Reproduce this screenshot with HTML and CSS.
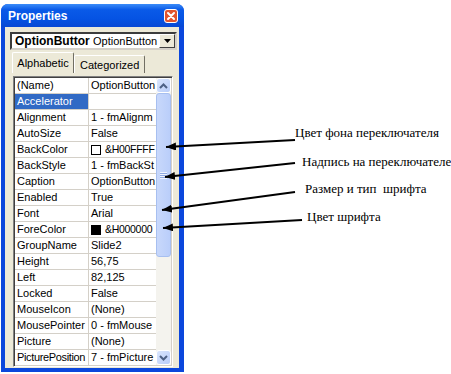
FILE: index.html
```html
<!DOCTYPE html>
<html lang="ru">
<head>
 <meta charset="UTF-8">
 <title>Properties</title>
 <link rel="stylesheet" href="styles.css">
</head>
<body>
 <div class="page">
   <div class="window">
     <div class="titlebar">
       <span class="title">Properties</span>
       <span class="close">
         <svg width="14" height="14" viewBox="0 0 14 14"><path d="M4 4 L10 10 M10 4 L4 10" stroke="#fff" stroke-width="2" stroke-linecap="round"/></svg>
       </span>
     </div>
     <div class="body">
       <div class="combo">
         <span class="combo-name">OptionButtor</span>
         <span class="combo-type">OptionButton</span>
         <span class="combo-btn">
           <svg width="7" height="4" viewBox="0 0 7 4"><path d="M0 0 H7 L3.5 4 Z" fill="#000"/></svg>
         </span>
       </div>
       <div class="tabs">
         <div class="tab active">Alphabetic</div>
         <div class="tab">Categorized</div>
       </div>
       <div class="grid">
         <div class="rows">
           <div class="row"><div class="cell name">(Name)</div><div class="cell value">OptionButton</div></div>
           <div class="row"><div class="cell name selected">Accelerator</div><div class="cell value"></div></div>
           <div class="row"><div class="cell name">Alignment</div><div class="cell value">1 - fmAlignm</div></div>
           <div class="row"><div class="cell name">AutoSize</div><div class="cell value">False</div></div>
           <div class="row"><div class="cell name">BackColor</div><div class="cell value"><span class="swatch white"></span><span class="hex">&amp;H00FFFF</span></div></div>
           <div class="row"><div class="cell name">BackStyle</div><div class="cell value">1 - fmBackSt</div></div>
           <div class="row"><div class="cell name">Caption</div><div class="cell value">OptionButton</div></div>
           <div class="row"><div class="cell name">Enabled</div><div class="cell value">True</div></div>
           <div class="row"><div class="cell name">Font</div><div class="cell value">Arial</div></div>
           <div class="row"><div class="cell name">ForeColor</div><div class="cell value"><span class="swatch black"></span><span class="hex">&amp;H000000</span></div></div>
           <div class="row"><div class="cell name">GroupName</div><div class="cell value">Slide2</div></div>
           <div class="row"><div class="cell name">Height</div><div class="cell value">56,75</div></div>
           <div class="row"><div class="cell name">Left</div><div class="cell value">82,125</div></div>
           <div class="row"><div class="cell name">Locked</div><div class="cell value">False</div></div>
           <div class="row"><div class="cell name">MouseIcon</div><div class="cell value">(None)</div></div>
           <div class="row"><div class="cell name">MousePointer</div><div class="cell value">0 - fmMouse</div></div>
           <div class="row"><div class="cell name">Picture</div><div class="cell value">(None)</div></div>
           <div class="row"><div class="cell name tight">PicturePosition</div><div class="cell value">7 - fmPicture</div></div>
         </div>
         <div class="scrollbar">
           <div class="sb-btn">
             <svg width="9" height="6" viewBox="0 0 9 6"><path d="M1 5 L4.5 1.5 L8 5" fill="none" stroke="#4d6185" stroke-width="2"/></svg>
           </div>
           <div class="sb-thumb"><span class="grip"></span></div>
           <div class="sb-track"></div>
           <div class="sb-btn">
             <svg width="9" height="6" viewBox="0 0 9 6"><path d="M1 1 L4.5 4.5 L8 1" fill="none" stroke="#4d6185" stroke-width="2"/></svg>
           </div>
         </div>
       </div>
     </div>
   </div>

   <svg class="notes" width="451" height="374" viewBox="0 0 451 374">
     <defs>
       <marker id="head" markerUnits="userSpaceOnUse" markerWidth="10" markerHeight="8" refX="10" refY="4" orient="auto">
         <path d="M0 0 L10 4 L0 8 Z" fill="#000"/>
       </marker>
     </defs>
     <line x1="295" y1="140" x2="166" y2="147" marker-end="url(#head)"/>
     <line x1="295" y1="163" x2="165" y2="177" marker-end="url(#head)"/>
     <line x1="295" y1="192" x2="162" y2="210" marker-end="url(#head)"/>
     <line x1="302" y1="220" x2="163" y2="228" marker-end="url(#head)"/>
     <text x="295" y="137">Цвет фона переключателя</text>
     <text x="302" y="166">Надпись на переключателе</text>
     <text x="305" y="193">Размер и тип&#160; шрифта</text>
     <text x="307" y="221">Цвет шрифта</text>
   </svg>
 </div>
</body>
</html>
```

FILE: styles.css
```css
body {
  margin: 0;
  background: #fff;
  font-family: "Liberation Sans", Arial, sans-serif;
}
.page {
  position: relative;
  width: 451px;
  height: 374px;
  overflow: hidden;
}
.window {
  margin: 4px 0 0 1px;
  width: 183px;
  height: 368px;
  box-sizing: border-box;
  padding: 0 5px 4px 4px;
  background: #0b47dc;
  border-radius: 7px 7px 0 0;
  display: flex;
  flex-direction: column;
}
.titlebar {
  height: 23px;
  margin: 0 -5px 0 -4px;
  padding: 0 6px 0 7px;
  display: flex;
  align-items: center;
  justify-content: space-between;
  background: linear-gradient(#3b8cf8, #0a5ae8 25%, #0553e3 65%, #0848d4);
  border-radius: 7px 7px 0 0;
}
.title {
  color: #fff;
  font-weight: bold;
  font-size: 12px;
}
.close {
  width: 14px;
  height: 14px;
  box-sizing: border-box;
  border: 1px solid #fff;
  border-radius: 3px;
  background: #e2552f;
  display: flex;
}
.close svg {
  margin: -1px;
}
.body {
  flex: 1;
  background: #ece9d8;
  padding: 5px 2px 1px 5px;
  display: flex;
  flex-direction: column;
  min-height: 0;
}
.combo {
  height: 18px;
  box-sizing: border-box;
  border: 2px solid;
  border-color: #3c3c3c #d4d0c8 #d4d0c8 #3c3c3c;
  background: #fff;
  display: flex;
  align-items: center;
  font-size: 11px;
  white-space: nowrap;
}
.combo-name {
  font-weight: bold;
  font-size: 12px;
  padding-left: 3px;
  width: 76px;
}
.combo-type {
  flex: 1;
  padding-left: 2px;
}
.combo-btn {
  width: 16px;
  height: 14px;
  box-sizing: border-box;
  background: #ece9d8;
  border: 1px solid;
  border-color: #fff #404040 #404040 #fff;
  display: flex;
  align-items: center;
  justify-content: center;
}
.tabs {
  display: flex;
  align-items: flex-end;
  margin: 2px 0 0 2px;
  height: 21px;
  font-size: 11px;
}
.tab {
  height: 18px;
  padding: 0 5px;
  box-sizing: border-box;
  border: 1px solid;
  border-bottom: none;
  border-color: #fff #716f64 #716f64 #fff;
  display: flex;
  align-items: center;
  border-radius: 2px 2px 0 0;
}
.tab.active {
  width: 62px;
  height: 21px;
  justify-content: center;
}
.grid {
  flex: 1;
  min-height: 0;
  margin: 3px 4px 0 3px;
  border: 1px solid;
  border-color: #808080 #fff #fff #808080;
  box-shadow: inset 1px 1px 0 #404040, inset -1px -1px 0 #d4d0c8;
  padding: 1px;
  background: #fff;
  display: flex;
}
.rows {
  flex: 1;
  overflow: hidden;
  font-size: 11px;
}
.row {
  display: flex;
  height: 16px;
}
.cell {
  height: 16px;
  line-height: 15px;
  box-sizing: border-box;
  border-bottom: 1px solid #d4d0c8;
  white-space: nowrap;
  overflow: hidden;
  color: #000;
}
.name {
  width: 74px;
  padding-left: 2px;
  border-right: 1px solid #d4d0c8;
}
.name.tight {
  letter-spacing: -0.35px;
}
.name.selected {
  background: #316ac5;
  color: #fff;
}
.value {
  flex: 1;
  padding-left: 2px;
  display: flex;
  align-items: center;
}
.swatch {
  width: 10px;
  height: 10px;
  box-sizing: border-box;
  border: 1px solid #000;
  margin-right: 4px;
  flex: none;
}
.swatch.white {
  background: #fff;
}
.swatch.black {
  background: #000;
}
.hex {
  font-size: 10.5px;
  letter-spacing: -0.3px;
}
.scrollbar {
  width: 15px;
  background: #f4f3ee;
  display: flex;
  flex-direction: column;
}
.sb-btn {
  height: 15px;
  box-sizing: border-box;
  border: 1px solid #fff;
  border-radius: 3px;
  background: linear-gradient(135deg, #d9e5fd, #b9cdf9);
  display: flex;
  align-items: center;
  justify-content: center;
}
.sb-thumb {
  height: 164px;
  box-sizing: border-box;
  border: 1px solid #a7bff0;
  border-radius: 3px;
  background: linear-gradient(90deg, #c8d8fb, #bacefa);
  display: flex;
  align-items: center;
  justify-content: center;
}
.grip {
  width: 7px;
  height: 7px;
  background: repeating-linear-gradient(#eef3fe 0 1px, #8fa9e4 1px 2px);
}
.sb-track {
  flex: 1;
}
.notes {
  position: absolute;
  left: 0;
  top: 0;
  pointer-events: none;
}
.notes line {
  stroke: #000;
  stroke-width: 2;
}
.notes text {
  font-family: "Liberation Serif", "Times New Roman", serif;
  font-size: 13px;
  fill: #000;
}
```
